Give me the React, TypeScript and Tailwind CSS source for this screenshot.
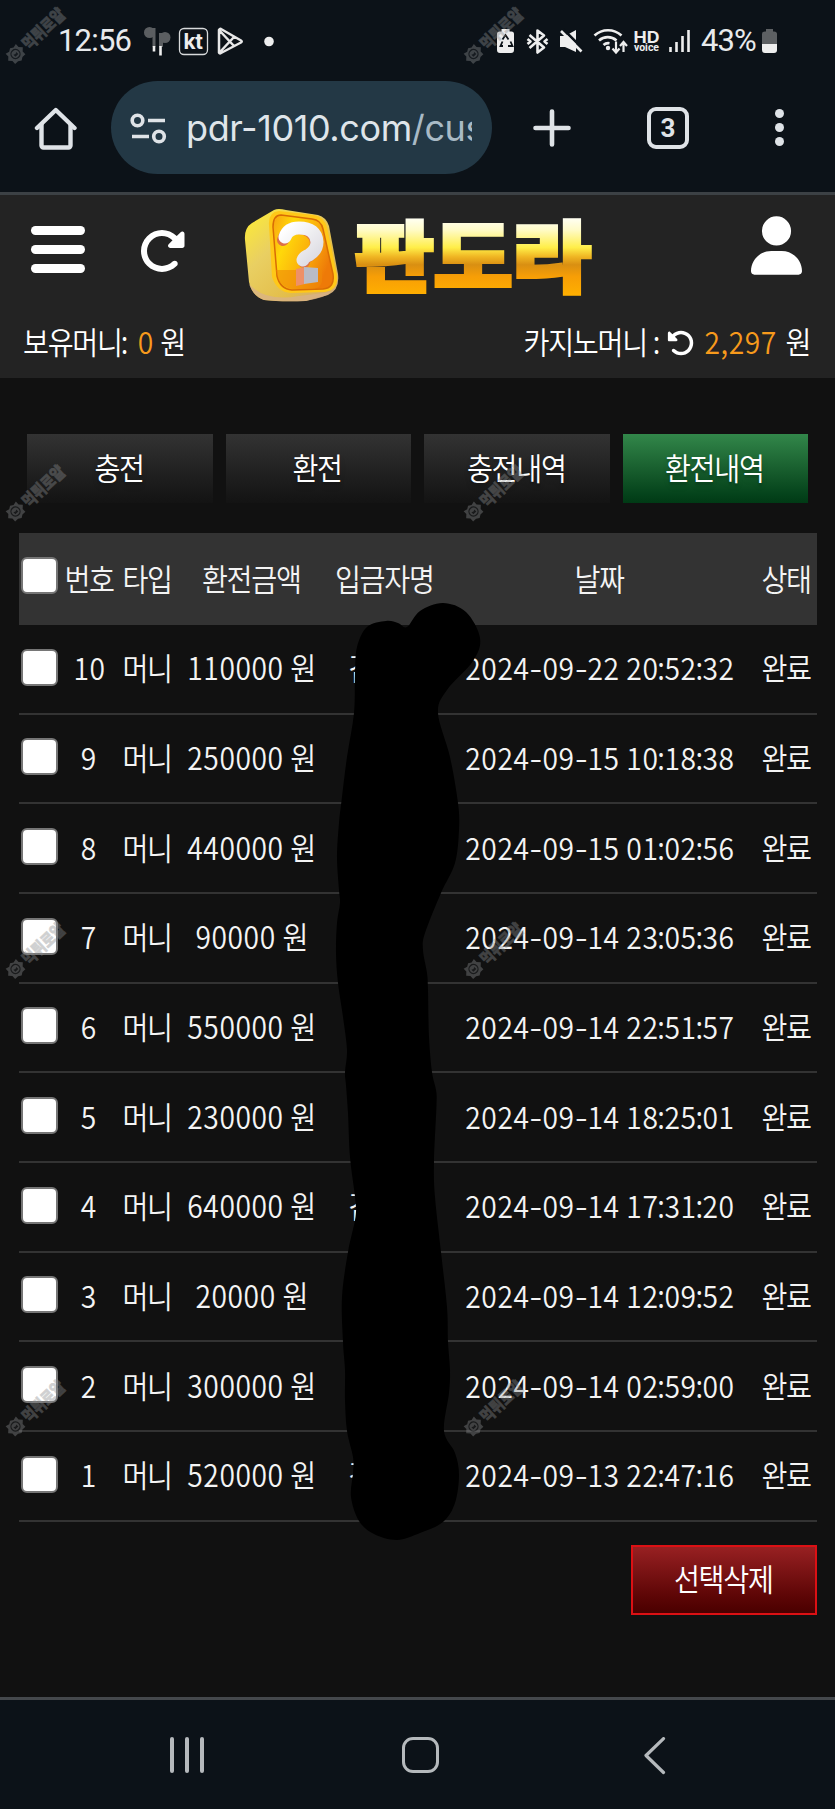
import React from "react";
import { FaRotateLeft, FaRotateRight, FaUser } from "react-icons/fa6";

type Row = { no: number; amount: string; date: string; name?: string };

const rows: Row[] = [
  { no: 10, amount: "110000", date: "2024-09-22 20:52:32", name: "김" },
  { no: 9, amount: "250000", date: "2024-09-15 10:18:38" },
  { no: 8, amount: "440000", date: "2024-09-15 01:02:56" },
  { no: 7, amount: "90000", date: "2024-09-14 23:05:36" },
  { no: 6, amount: "550000", date: "2024-09-14 22:51:57" },
  { no: 5, amount: "230000", date: "2024-09-14 18:25:01" },
  { no: 4, amount: "640000", date: "2024-09-14 17:31:20", name: "김" },
  { no: 3, amount: "20000", date: "2024-09-14 12:09:52" },
  { no: 2, amount: "300000", date: "2024-09-14 02:59:00" },
  { no: 1, amount: "520000", date: "2024-09-13 22:47:16", name: "김" },
];

const columns =
  "grid grid-cols-[43px_57px_59px_149px_116px_315px_58px] items-center justify-items-center";

function runClass(run: string) {
  if (/[가-힣]/.test(run)) return "tracking-[-1.4px]";
  if (run === "-") return "inline-block scale-x-[1.3] mx-[1.8px]";
  if (run === ":") return "-mx-[1.2px] tracking-[0.6px]";
  return "tracking-[0.6px]";
}

/* Condensed label: Hangul runs are tracked a little tighter than digits. */
function Label({ children, className = "" }: { children: string; className?: string }) {
  const runs = children.match(/[가-힣]+|[-:]|[^가-힣:-]+/g) ?? [];
  return (
    <span className={`mr-[1.5px] inline-block scale-x-[0.91] pb-[4px] whitespace-pre text-[31px] leading-none font-[350] ${className}`}>
      {runs.map((run, i) => (
        <span key={i} className={runClass(run)}>
          {run}
        </span>
      ))}
    </span>
  );
}

function Check() {
  return <span className="mr-px block h-[37px] w-[37px] rounded-[6px] border-2 border-[#767676] bg-white" />;
}

function StatusBar() {
  return (
    <div className="flex h-[81px] items-center pl-[58px]">
      <span className="w-[82px] font-[Roboto] text-[31px] leading-none tracking-[-0.8px] text-[#e8eaec]">12:56</span>
      <svg className="h-[40px] w-[140px]" viewBox="140 20 140 40" fill="none">
        <g fill="#5b5e61">
          <circle cx="149.500" cy="31.500" r="5.500" />
          <path d="M151 27h4.500v19h-3V36z" />
          <circle cx="165" cy="36.500" r="5.500" />
          <path d="M159 32h4v14h-4z" />
        </g>
        <path d="M154 45v5.500M160.500 45v9.500" stroke="#eee" strokeWidth="2.600" />
        <rect x="179.500" y="27.500" width="28" height="26" rx="4.500" stroke="#d8dadb" strokeWidth="1.300" />
        <text x="193" y="48" textAnchor="middle" fontFamily="Inter, sans-serif" fontWeight="700" fontSize="21" letterSpacing="-.5" fill="#eee">kt</text>
        <path d="M219 29v22.500q.5 1.500 2 .5l20-10.500q1.500-1 0-2l-20-11.500q-1.500-.5-2 1zM219.500 29.500l14.500 15.500M219.500 51.500l14.500-15.500" stroke="#e8e8e8" strokeWidth="2.500" strokeLinejoin="round" strokeLinecap="round" />
        <circle cx="269" cy="40.500" r="4.800" fill="#eee" />
      </svg>
      <svg className="ml-[214px] h-[40px] w-[200px]" viewBox="494 20 200 40" fill="none">
        <path d="M497 33q0-2.500 2.500-2.500h2V28h8v2.500h2q2.500 0 2.500 2.500v16q0 3-3 3h-11q-3 0-3-3z" fill="#eee" />
        <path d="M502.500 38.500l3-4.500 3 4.500M510.500 40.500l2 4.500h-4.500M503 45l-2.500 0 2-4.500" stroke="#0c1218" strokeWidth="1.800" />
        <path d="M529.500 34l14.500 12.500-6.500 5v-22l6.500 5-14.500 12.500M527.500 38l3 2.500-3 2.500M547.500 38l-3 2.500 3 2.500" stroke="#eee" strokeWidth="2.600" strokeLinejoin="round" />
        <path d="M560 35h5l11-6v22l-11-5h-5z" fill="#eee" />
        <path d="M563 28l21 21" stroke="#0c1218" strokeWidth="2.500" />
        <path d="M561 30l20.500 20.500" stroke="#eee" strokeWidth="2.600" />
        <path d="M594.500 34.500a20 20 0 0 1 27 0M599 39.500a13 13 0 0 1 17.500 0M603.500 44a7 7 0 0 1 6-1.800" stroke="#eee" strokeWidth="2.600" />
        <circle cx="608" cy="47" r="2.200" fill="#eee" />
        <path d="M616 40.500v10M612.500 47.500l3.500 4 3.500-4M623.500 51v-9M620 45l3.500-4 3.500 4" stroke="#eee" strokeWidth="2.200" />
        <text x="646.500" y="41.500" textAnchor="middle" fontFamily="Inter, sans-serif" fontWeight="700" fontSize="15.500" textLength="26" lengthAdjust="spacingAndGlyphs" fill="#eee">HD</text>
        <text x="646.500" y="50" textAnchor="middle" fontFamily="Roboto, sans-serif" fontWeight="700" fontSize="10" textLength="25" lengthAdjust="spacingAndGlyphs" fill="#eee">voice</text>
        <path d="M670.500 46v5M676.500 41v10M682.500 35v16M688.500 29v22" stroke="#eee" strokeWidth="2.600" />
      </svg>
      <span className="ml-[7px] w-[60px] whitespace-nowrap font-[Roboto] text-[31px] leading-none tracking-[-0.9px] text-[#e8eaec]">43%</span>
      <svg className="h-[26px] w-[18px]" viewBox="0 0 18 26">
        <path d="M1 6q0-2.500 3-2.500h1V1h7v2.500h1q3 0 3 2.500v11H1z" fill="#5d6063" />
        <path d="M1 16h15v6q0 3-3 3H4q-3 0-3-3z" fill="#eee" />
      </svg>
    </div>
  );
}

function BrowserBar() {
  return (
    <div className="flex h-[93px] items-center">
      <svg className="ml-[34px] h-[44px] w-[44px]" viewBox="34 105 44 44" fill="none" stroke="#dfe3e7" strokeWidth="4.400" strokeLinejoin="round">
        <path d="M37 127L55.800 109 74.500 127" strokeLinecap="round" />
        <path d="M41.500 123v21.500a2 2 0 0 0 2 2h25a2 2 0 0 0 2-2V123" />
      </svg>
      <div className="ml-[33px] flex h-[93px] w-[381px] items-center rounded-full bg-[#233845]">
        <svg className="ml-[19px] h-[32px] w-[37px]" viewBox="130 111 37 32" fill="none" stroke="#dfe3e7" strokeWidth="3.600">
          <circle cx="137.500" cy="119.500" r="5.300" />
          <path d="M148 119.500h17M132 135.500h17" />
          <circle cx="159" cy="135.500" r="5.300" />
        </svg>
        <div className="ml-[19px] w-[286px] overflow-hidden">
          <span className="inline-block whitespace-nowrap font-[Inter] text-[36px] leading-[50px] tracking-[-0.4px] text-[#dfe5ea]">
            pdr-1010.com<span className="text-[#a9bac5]">/cus</span>
          </span>
        </div>
      </div>
      <svg className="ml-[40px] h-[40px] w-[40px]" viewBox="0 0 40 40" stroke="#dfe3e7" strokeWidth="4.600" strokeLinecap="round">
        <path d="M20 3.500v33M3.500 20h33" />
      </svg>
      <div className="ml-[75px] flex h-[42px] w-[42px] items-center justify-center rounded-[9px] border-4 border-[#dfe3e7] font-[Roboto] text-[26px] leading-none font-bold text-[#dfe3e7]">3</div>
      <div className="ml-[86px] flex flex-col gap-[5px]">
        <span className="h-[9px] w-[9px] rounded-full bg-[#dfe3e7]" />
        <span className="h-[9px] w-[9px] rounded-full bg-[#dfe3e7]" />
        <span className="h-[9px] w-[9px] rounded-full bg-[#dfe3e7]" />
      </div>
    </div>
  );
}

function Logo() {
  return (
    <svg className="h-[100px] w-[354px]" viewBox="242 205 354 100">
      <defs>
        <linearGradient id="side" x1="0" y1="0" x2="1" y2="1">
          <stop offset="0" stopColor="#ffee30" />
          <stop offset=".35" stopColor="#e9cf62" />
          <stop offset=".7" stopColor="#e3bd4a" />
          <stop offset="1" stopColor="#c9a588" />
        </linearGradient>
        <linearGradient id="face" x1="0" y1="0" x2="1" y2=".5">
          <stop offset="0" stopColor="#f8a010" />
          <stop offset=".3" stopColor="#ffd80a" />
          <stop offset=".65" stopColor="#fbb00c" />
          <stop offset="1" stopColor="#ee7a08" />
        </linearGradient>
        <linearGradient id="mark" x1="0" y1="0" x2="1" y2="1">
          <stop offset="0" stopColor="#ffffff" />
          <stop offset="1" stopColor="#dcdbe2" />
        </linearGradient>
        <linearGradient id="gold" gradientUnits="userSpaceOnUse" x1="0" y1="218" x2="0" y2="296">
          <stop offset="0" stopColor="#fffff4" />
          <stop offset=".15" stopColor="#fffbc8" />
          <stop offset=".38" stopColor="#ffee48" />
          <stop offset=".5" stopColor="#efb422" />
          <stop offset=".6" stopColor="#d98f12" />
          <stop offset=".75" stopColor="#f79e06" />
          <stop offset="1" stopColor="#ffb000" />
        </linearGradient>
      </defs>
      <path d="M274 210Q278 208 286 210L318 215Q326 217 329 226L338 274Q340 290 328 295L306 301Q280 302 264 300Q252 296 249 282L245 240Q244 228 252 223Z" fill="url(#side)" />
      <path d="M249 284q16 18 50 12l32-4q-6 6-26 9-24 1-41-1-10-3-15-16z" fill="#d8b189" opacity=".75" />
      <path d="M279 211l35 4q10 2 13 12l10 48q2 15-12 17l-34 1q-14-1-19-16l-3-52q-1-13 10-14z" fill="#ffc818" />
      <path d="M281 215l31 4q9 1 11 10l10 45q2 14-10 15l-31 1q-12-1-15-14l-4-49q0-12 8-12z" fill="url(#face)" stroke="#d86c05" strokeWidth="1.500" />
      <path d="M276 270h46v12q-2 7-11 7h-19q-14-2-16-19z" fill="#ef8908" opacity=".6" />
      <path d="M283 240q4-12 15-12 17 1 18 15 0 9-9 14-3 2-3 5" fill="none" stroke="#dd7045" strokeWidth="12" strokeLinecap="round" />
      <path d="M285 237q3-9 14-9 17 0 18 14 0 8-8 13-5 2-6 5" fill="none" stroke="url(#mark)" strokeWidth="13" strokeLinecap="round" />
      <path d="M296 269l9-2v17l-9 2z" fill="#ee9068" />
      <path d="M304 267l14 1v14l-14 2z" fill="#b9bbc6" />
      <text x="355" y="286" fontFamily="'Noto Sans CJK KR', sans-serif" fontWeight="900" fontSize="77" textLength="236" lengthAdjust="spacingAndGlyphs" fill="url(#gold)" stroke="url(#gold)" strokeWidth="4">판도라</text>
    </svg>
  );
}

function SiteHeader() {
  return (
    <header className="h-[183px] bg-[#232323] text-white">
      <div className="flex h-[113px] items-start">
        <div className="mt-[31px] ml-[31px] flex w-[54px] flex-col gap-[10px]">
          <span className="h-[9px] rounded-full bg-white" />
          <span className="h-[9px] rounded-full bg-white" />
          <span className="h-[9px] rounded-full bg-white" />
        </div>
        <FaRotateRight className="mt-[32px] ml-[53px] h-[48px] w-[48px]" />
        <div className="mt-[10px] ml-[56px]"><Logo /></div>
        <FaUser className="mt-[21px] ml-[155px] h-[59px] w-[51px]" />
      </div>
      <div className="flex h-[70px] items-start justify-between px-[23px] pt-[17px]">
        <div className="flex items-center">
          <Label className="origin-left">보유머니:</Label>
          <span className="-ml-[3px] text-[#f79a1c]"><Label>0</Label></span>
          <Label className="ml-[3px]">원</Label>
        </div>
        <div className="flex items-center">
          <Label className="origin-right">카지노머니 :</Label>
          <FaRotateLeft className="mr-[6px] ml-[6px] h-[28px] w-[28px]" />
          <Label className="text-[#f79a1c]">2,297</Label>
          <Label className="ml-[1px] origin-right">원</Label>
        </div>
      </div>
    </header>
  );
}

const tabs = ["충전", "환전", "충전내역", "환전내역"];

function Tabs() {
  return (
    <nav className="mt-[56px] flex h-[69px] gap-[13px] px-[27px] text-white">
      {tabs.map((tab, i) => (
        <div
          key={tab}
          className={`flex flex-1 items-center justify-center bg-linear-to-b text-shadow-lg ${
            i === 3 ? "from-[#32874a] to-[#003a15]" : "from-[#333333] to-[#131313]"
          }`}
        >
          <Label>{tab}</Label>
        </div>
      ))}
    </nav>
  );
}

function HistoryTable() {
  return (
    <section className="mr-[18px] ml-[18.5px] mt-[30px] w-[798px] text-[#f4f4f4]">
      <div className={`${columns} h-[92px] bg-[#333333]`}>
        <div className="pb-[8px]"><Check /></div>
        {["번호", "타입", "환전금액", "입금자명", "날짜", "상태"].map((title) => (
          <Label key={title}>{title}</Label>
        ))}
      </div>
      {rows.map((row) => (
        <div key={row.no} className={`${columns} h-[89.67px] border-b-2 border-[#333333]`}>
          <div className="pb-[3px]"><Check /></div>
          <Label>{String(row.no)}</Label>
          <Label>머니</Label>
          <Label>{`${row.amount} 원`}</Label>
          <span className="w-full pl-[20px]">{row.name && <Label>{row.name}</Label>}</span>
          <Label className="ml-[1.5px]">{row.date}</Label>
          <Label>완료</Label>
        </div>
      ))}
    </section>
  );
}

const outline: [number, number][] = [
  [386, 621], [398, 623], [407, 627], [420, 611], [443, 603], [466, 612], [480, 638], [473, 661], [447, 690], [438, 713],
  [450, 757], [458, 803], [459, 830], [455, 863], [441, 893], [425, 933], [423, 950], [427, 973], [428, 990], [429, 1037],
  [432, 1072], [436, 1090], [436.5, 1105], [434, 1162], [435, 1197], [441, 1252], [447, 1307], [448, 1342], [450, 1370],
  [449, 1393], [444, 1431], [455, 1453], [459, 1475], [455, 1503], [443, 1522], [420, 1533], [397, 1540], [374, 1534],
  [359, 1521], [351, 1497], [353, 1473], [353, 1457], [347, 1431], [345, 1400], [345, 1370], [343, 1342], [342, 1297],
  [348, 1252], [355.5, 1217], [355, 1197], [350, 1157], [348, 1113], [346, 1085], [345, 1072], [347, 1050], [343, 1017],
  [338, 983], [336, 953], [337, 923], [340, 903], [339, 890], [337, 857], [339, 823], [342, 797], [347, 757], [354, 713],
  [355, 673], [357, 647], [367, 627],
];

function smooth(points: [number, number][]) {
  const n = points.length;
  let d = `M${points[0][0]} ${points[0][1]}`;
  for (let i = 0; i < n; i++) {
    const [a, b, c, e] = [points[(i + n - 1) % n], points[i], points[(i + 1) % n], points[(i + 2) % n]];
    d += `C${b[0] + (c[0] - a[0]) / 6} ${b[1] + (c[1] - a[1]) / 6} ${c[0] - (e[0] - b[0]) / 6} ${c[1] - (e[1] - b[1]) / 6} ${c[0]} ${c[1]}`;
  }
  return d + "Z";
}

/* Marker stroke over the depositor names, and the repeated stamp. */
function Overlay() {
  return (
    <svg className="pointer-events-none absolute inset-0 h-[1809px] w-[835px]" viewBox="0 0 835 1809">
      <path d={smooth(outline)} fill="#000" />
      {[0, 457.5, 915, 1372.5].flatMap((y) =>
        [0, 458].map((x) => (
          <g key={`${x}-${y}`} transform={`translate(${x + 15.5} ${y + 54}) rotate(-43)`} opacity=".4">
            <path d="M0-8l3 2 4-1 0 4 3 3-3 3 0 4-4 0-3 2-3-2-4 0 0-4-3-3 3-3 0-4 4 1z" fill="#8a8c8e" />
            <circle r="4.500" fill="none" stroke="#26292c" strokeWidth="1.300" />
            <path d="M-2-1l2 1 2-1v3h-4z" fill="#26292c" />
            <text x="12" y="7" fontFamily="'Noto Sans CJK KR', sans-serif" fontWeight="900" fontSize="17" textLength="51" lengthAdjust="spacingAndGlyphs" fill="#8a8c8e" stroke="#8a8c8e" strokeWidth=".6">먹튀로얄</text>
          </g>
        )),
      )}
    </svg>
  );
}

export default function App() {
  return (
    <div className="relative flex h-[1809px] w-[835px] flex-col overflow-hidden bg-[#111111] font-['Noto_Sans_CJK_KR',sans-serif]">
      <div className="h-[195px] shrink-0 border-b-[3px] border-[#3c4145] bg-[#0c1218]">
        <StatusBar />
        <BrowserBar />
      </div>
      <SiteHeader />
      <Tabs />
      <HistoryTable />
      <div className="mt-[23px] mr-[18px] flex h-[70px] w-[186px] items-center justify-center self-end border-2 border-[#dc1014] bg-linear-to-b from-[#982022] to-[#4a0000] text-white">
        <Label>선택삭제</Label>
      </div>
      <footer className="mt-auto flex h-[112px] shrink-0 items-start border-t-[3px] border-[#44484c] bg-[#0c1218] pt-[37px]">
        <div className="ml-[170px] flex h-[36px] gap-[11px]">
          <span className="w-[4px] rounded-full bg-[#b5b9bc]" />
          <span className="w-[4px] rounded-full bg-[#b5b9bc]" />
          <span className="w-[4px] rounded-full bg-[#b5b9bc]" />
        </div>
        <div className="ml-[198px] h-[36px] w-[37px] rounded-[11px] border-[3px] border-[#b5b9bc]" />
        <svg className="ml-[204px] h-[38px] w-[24px]" viewBox="0 0 24 38" fill="none" stroke="#b5b9bc" strokeWidth="3.200" strokeLinecap="round" strokeLinejoin="round">
          <path d="M20.500 1.600L3 18.500l17.500 17" />
        </svg>
      </footer>
      <Overlay />
    </div>
  );
}
